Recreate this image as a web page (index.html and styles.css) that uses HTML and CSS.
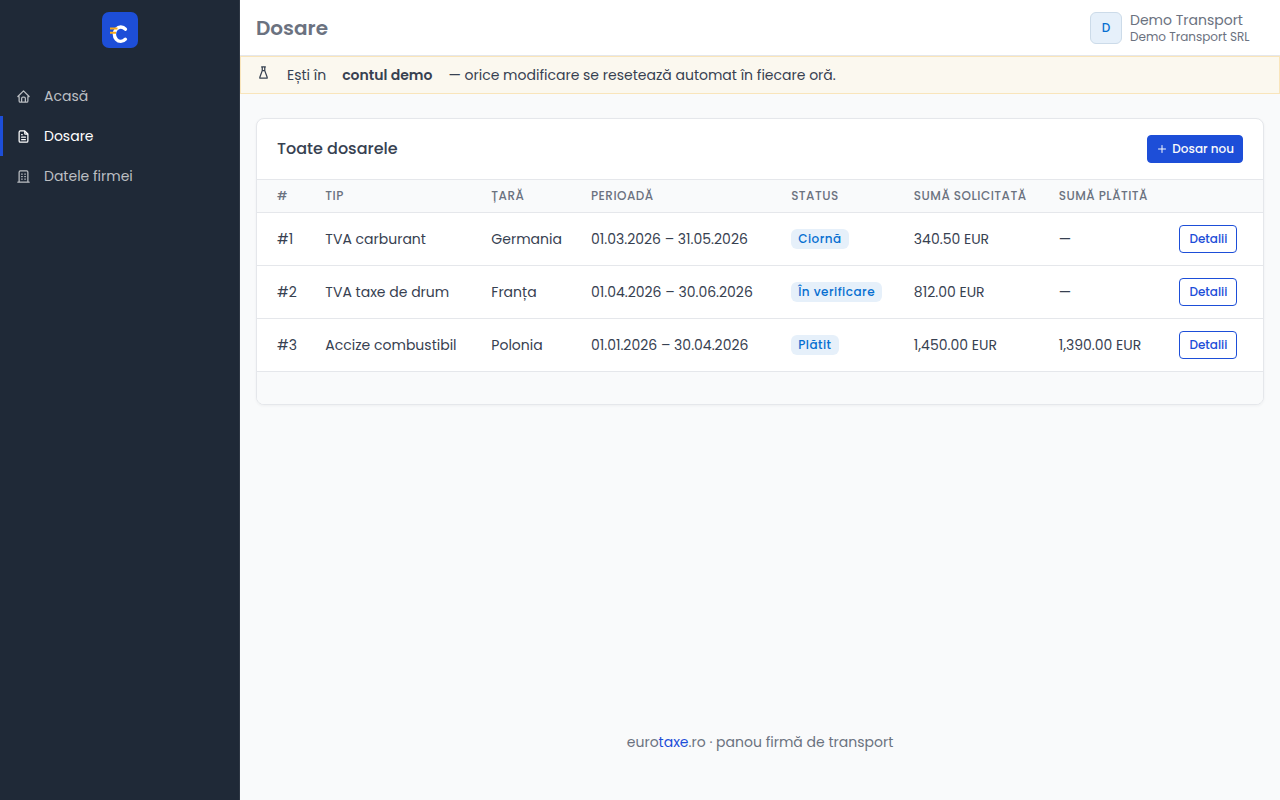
FILE: index.html
```html
<!DOCTYPE html>
<html lang="ro">
<head>
<meta charset="utf-8">
<meta name="viewport" content="width=device-width, initial-scale=1">
<title>Dosare</title>
<link rel="stylesheet" href="styles.css">
</head>
<body>
<div class="page">
  <aside class="sidebar">
    <a class="brand" href="#" aria-label="eurotaxe.ro">
      <svg width="36" height="36" viewBox="0 0 36 36" fill="none">
        <rect width="36" height="36" rx="7" fill="#1d4ed8"/>
        <path d="M23.4 17.2A6.4 7.2 0 1 0 23.4 27.2" stroke="#fff" stroke-width="3.4" stroke-linecap="round"/>
        <path d="M8 16.5h7.5M8 20.8h6" stroke="#fbab18" stroke-width="2"/>
      </svg>
    </a>
    <nav class="menu">
      <a class="menu-link" href="#">
        <svg class="icon" viewBox="0 0 24 24"><path d="M5 12H3l9-9 9 9h-2M5 12v7a2 2 0 0 0 2 2h10a2 2 0 0 0 2-2v-7M9 21v-6a2 2 0 0 1 2-2h2a2 2 0 0 1 2 2v6"/></svg>
        <span>Acasă</span>
      </a>
      <a class="menu-link active" href="#" aria-current="page">
        <svg class="icon" viewBox="0 0 24 24"><path d="M14 3v4a1 1 0 0 0 1 1h4M17 21H7a2 2 0 0 1-2-2V5a2 2 0 0 1 2-2h7l5 5v11a2 2 0 0 1-2 2zM9 9h1M9 13h6M9 17h6"/></svg>
        <span>Dosare</span>
      </a>
      <a class="menu-link" href="#">
        <svg class="icon" viewBox="0 0 24 24"><path d="M3 21h18M9 8h1M9 12h1M9 16h1M14 8h1M14 12h1M14 16h1M5 21V5a2 2 0 0 1 2-2h10a2 2 0 0 1 2 2v16"/></svg>
        <span>Datele firmei</span>
      </a>
    </nav>
  </aside>
  <div class="content">
    <header class="topbar">
      <h1 class="title">Dosare</h1>
      <a class="user" href="#">
        <span class="avatar">D</span>
        <span class="user-text">
          <span class="user-name">Demo Transport</span>
          <span class="user-firm">Demo Transport SRL</span>
        </span>
      </a>
    </header>
    <div class="alert" role="status">
      <svg class="icon" viewBox="0 0 24 24"><path d="M9 3h6M10 9h4M10 3v6l-4 11a.7.7 0 0 0 .5 1h11a.7.7 0 0 0 .5-1l-4-11V3"/></svg>
      <span>Ești în</span>
      <strong>contul demo</strong>
      <span>— orice modificare se resetează automat în fiecare oră.</span>
    </div>
    <main class="main">
      <section class="card">
        <div class="card-header">
          <h2 class="card-title">Toate dosarele</h2>
          <button class="btn btn-primary" type="button">
            <svg class="icon icon-small" viewBox="0 0 24 24"><path d="M12 5v14M5 12h14"/></svg>
            Dosar nou
          </button>
        </div>
        <table class="table">
          <colgroup>
            <col class="col-id"><col class="col-type"><col class="col-country"><col class="col-period">
            <col class="col-status"><col class="col-asked"><col class="col-paid"><col>
          </colgroup>
          <thead>
            <tr><th>#</th><th>Tip</th><th>Țară</th><th>Perioadă</th><th>Status</th><th>Sumă solicitată</th><th>Sumă plătită</th><th></th></tr>
          </thead>
          <tbody>
            <tr><td>#1</td><td>TVA carburant</td><td>Germania</td><td>01.03.2026 – 31.05.2026</td><td><span class="badge">Ciornă</span></td><td>340.50 EUR</td><td>—</td><td><button class="btn btn-outline" type="button">Detalii</button></td></tr>
            <tr><td>#2</td><td>TVA taxe de drum</td><td>Franța</td><td>01.04.2026 – 30.06.2026</td><td><span class="badge">În verificare</span></td><td>812.00 EUR</td><td>—</td><td><button class="btn btn-outline" type="button">Detalii</button></td></tr>
            <tr><td>#3</td><td>Accize combustibil</td><td>Polonia</td><td>01.01.2026 – 30.04.2026</td><td><span class="badge">Plătit</span></td><td>1,450.00 EUR</td><td>1,390.00 EUR</td><td><button class="btn btn-outline" type="button">Detalii</button></td></tr>
          </tbody>
        </table>
        <div class="card-footer"></div>
      </section>
    </main>
    <footer class="footer">euro<span class="accent">taxe</span>.ro · panou firmă de transport</footer>
  </div>
</div>
</body>
</html>
```
FILE: styles.css
```css
* { box-sizing: border-box; }

body {
  margin: 0;
  background: #f9fafb;
  color: #374151;
  font: 400 14px/20px Poppins, Inter, "Noto Sans", sans-serif;
}

a { color: inherit; text-decoration: none; }

.page { display: flex; min-height: 100vh; }

.sidebar {
  flex: 0 0 240px;
  background: #1f2937;
  border-right: 1px solid #2e3744;
  color: #bcbfc3;
}

.brand { display: flex; justify-content: center; padding: 12px 0; }
.menu { padding-top: 16px; }

.menu-link {
  display: flex;
  align-items: center;
  gap: 13px;
  height: 40px;
  padding-left: 13px;
  border-left: 3px solid transparent;
}

.menu-link.active { color: #fff; border-left-color: #1d4ed8; }

.icon {
  flex: none;
  width: 15px;
  height: 15px;
  fill: none;
  stroke: currentColor;
  stroke-width: 2;
  stroke-linecap: round;
  stroke-linejoin: round;
}

.icon-small { width: 12px; height: 12px; }

.content { flex: 1; min-width: 0; display: flex; flex-direction: column; }

.topbar {
  display: flex;
  align-items: center;
  justify-content: space-between;
  height: 56px;
  padding: 0 24px 0 16px;
  background: #fff;
  border-bottom: 1px solid #e5e7eb;
  color: #6b7280;
}

.title { margin: 0; font-size: 20px; line-height: 28px; font-weight: 600; }
.user { display: flex; align-items: center; gap: 8px; }

.avatar {
  display: flex;
  align-items: center;
  justify-content: center;
  width: 32px;
  height: 32px;
  border: 1px solid #ccdbe9;
  border-radius: 6px;
  background: #e6f0fa;
  color: #066fd1;
  font-size: 12px;
  font-weight: 500;
}

.user-text { display: flex; flex-direction: column; min-width: 126px; }
.user-name { line-height: 18px; }
.user-firm { font-size: 12px; line-height: 16px; }

.alert {
  display: flex;
  align-items: flex-start;
  gap: 16px;
  padding: 8px 15px;
  border: 1px solid #f9e5bb;
  background: #fbf8ef;
}

.alert strong { font-weight: 600; }

.main { flex: 1; padding: 24px 16px; }

.card {
  overflow: hidden;
  background: #fff;
  border: 1px solid #e5e7eb;
  border-radius: 8px;
  box-shadow: 0 1px 3px rgba(31, 41, 55, 0.05);
}

.card-header {
  display: flex;
  align-items: center;
  justify-content: space-between;
  padding: 16px 20px;
}

.card-title { margin: 0; font-size: 16px; line-height: 24px; font-weight: 500; }

.btn {
  display: inline-flex;
  align-items: center;
  gap: 4px;
  height: 28px;
  padding: 0 8px;
  border: 1px solid #1d4ed8;
  border-radius: 4px;
  font: inherit;
  font-size: 12px;
  font-weight: 500;
  white-space: nowrap;
  cursor: pointer;
}

.btn-primary { background: #1d4ed8; color: #f9fafb; }
.btn-outline { padding: 0 9px; background: #fff; color: #1d4ed8; }

.table {
  width: 100%;
  border-collapse: separate;
  border-spacing: 0;
  table-layout: fixed;
  border-top: 1px solid #e5e7eb;
}

.col-id { width: 6%; }
.col-type { width: 16.5%; }
.col-country { width: 9.9%; }
.col-period { width: 19.9%; }
.col-status { width: 12.2%; }
.col-asked { width: 14.4%; }
.col-paid { width: 12%; }

.table th,
.table td {
  padding: 0 8px;
  border-bottom: 1px solid #e5e7eb;
  text-align: left;
  vertical-align: middle;
  white-space: nowrap;
}

.table th {
  height: 33px;
  background: #f9fafb;
  color: #6b7280;
  font-size: 12px;
  line-height: 16px;
  font-weight: 500;
  letter-spacing: 0.04em;
  text-transform: uppercase;
}

.table td { height: 53px; }
.table th:first-child,
.table td:first-child { padding-left: 20px; }
.table .btn { vertical-align: middle; }

.badge {
  display: inline-block;
  padding: 2px 7px;
  border-radius: 6px;
  background: #e6f0fa;
  color: #066fd1;
  font-size: 12px;
  line-height: 16px;
  font-weight: 500;
  letter-spacing: 0.04em;
  vertical-align: bottom;
}

.card-footer { height: 32px; background: #f9fafb; }

.footer { padding: 32px 16px 48px; color: #6b7280; text-align: center; }
.accent { color: #1d4ed8; }
```
